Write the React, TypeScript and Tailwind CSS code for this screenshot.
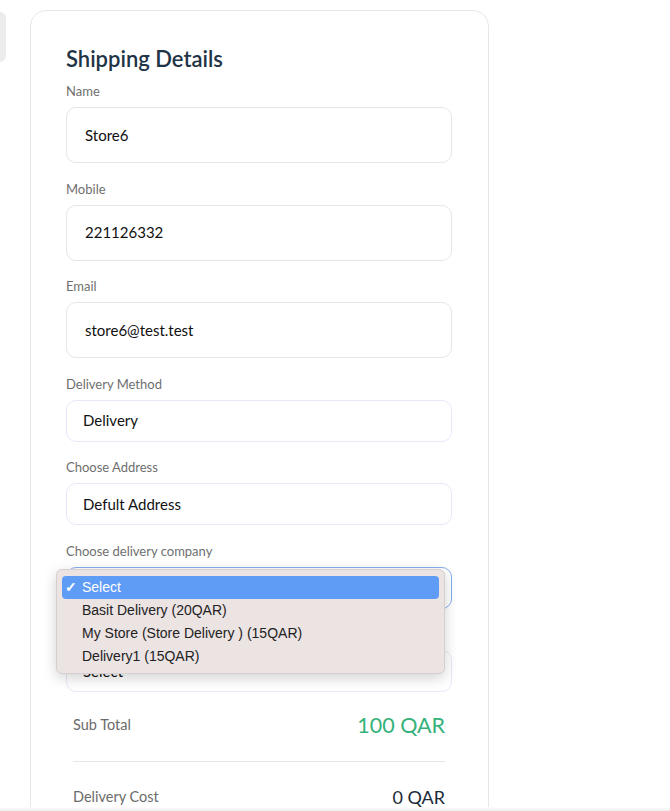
import React from 'react'

const Field = ({ label, value, tall, tone = 'gray', focused }: { label: string; value: string; tall?: boolean; tone?: 'gray' | 'lav'; focused?: boolean }) => {
    const border = focused ? 'border-[#86adef]' : tone === 'lav' ? 'border-[#ebe7fb]' : 'border-[#e6e6e6]'
    return (
        <div className="flex flex-col">
            <label className="text-[13px] leading-[16px] text-[#6f6f6f]">{label}</label>
            <div
                className={`mt-[8px] flex items-center rounded-[10px] border bg-white text-[15px] text-[#111] ${border} ${tall ? 'h-[56px] pl-[18px]' : 'h-[42px] pl-[16px]'}`}
            >
                {value}
            </div>
        </div>
    )
}

const options = ['Basit Delivery (20QAR)', 'My Store (Store Delivery ) (15QAR)', 'Delivery1 (15QAR)']

const App = () => {
    return (
        <div className="relative h-[811px] w-[670px] overflow-hidden bg-white font-['Lato',sans-serif]">
            <div className="flex items-start">
                <div className="mt-[12px] h-[50px] w-[6px] rounded-r-[8px] bg-[#ececec]" />
                <div className="ml-[24px] mt-[10px] h-[900px] w-[459px] rounded-[16px] border border-[#e7e7e7] bg-white pl-[35px] pr-[36px] pt-[34px]">
                    <h1 className="text-[22px] leading-[28px] font-semibold text-[#1f3446]">Shipping Details</h1>
                    <div className="mt-[10px] flex flex-col gap-[17.5px]">
                        <Field label="Name" value="Store6" tall />
                        <Field label="Mobile" value="221126332" tall />
                        <Field label="Email" value="store6@test.test" tall />
                        <Field label="Delivery Method" value="Delivery" tone="lav" />
                        <Field label="Choose Address" value="Defult Address" tone="lav" />
                        <div className="relative">
                            <Field label="Choose delivery company" value="Select" tone="lav" focused />
                            {/* open native select menu */}
                            <div className="absolute left-[-10px] top-[26px] z-10 w-[389px] rounded-[6px] border border-[#d6cfcf] bg-[#ece3e3] px-[5px] pt-[6px] pb-[5px] shadow-[0_4px_14px_rgba(0,0,0,0.18)] font-['Liberation_Sans',sans-serif] text-[14px]">
                                <div className="flex h-[23px] items-center rounded-[4px] bg-[#5f9cf5] pl-[3px] text-white">
                                    <span className="w-[17px] text-[14px] font-bold">✓</span>
                                    <span>Select</span>
                                </div>
                                {options.map((o) => (
                                    <div key={o} className="flex h-[23px] items-center pl-[20px] text-[#222]">
                                        {o}
                                    </div>
                                ))}
                            </div>
                        </div>
                        <Field label="Payment Method" value="Select" tone="lav" />
                    </div>
                    <div className="px-[7px]">
                        <div className="mt-[13px] flex h-[40px] items-center justify-between">
                            <span className="text-[14.5px] text-[#6b6b6b]">Sub Total</span>
                            <span className="text-[21.5px] text-[#35b27a]">100 QAR</span>
                        </div>
                        <div className="mt-[16px] h-px bg-[#e6e6e6]" />
                        <div className="mt-[15px] flex h-[40px] items-center justify-between">
                            <span className="text-[14.5px] text-[#6b6b6b]">Delivery Cost</span>
                            <span className="text-[18px] text-[#1c2a38]">0 QAR</span>
                        </div>
                    </div>
                </div>
            </div>
            <div className="absolute bottom-0 left-0 h-[4px] w-full bg-gradient-to-b from-white to-[#ededed]" />
        </div>
    )
}

export default App
